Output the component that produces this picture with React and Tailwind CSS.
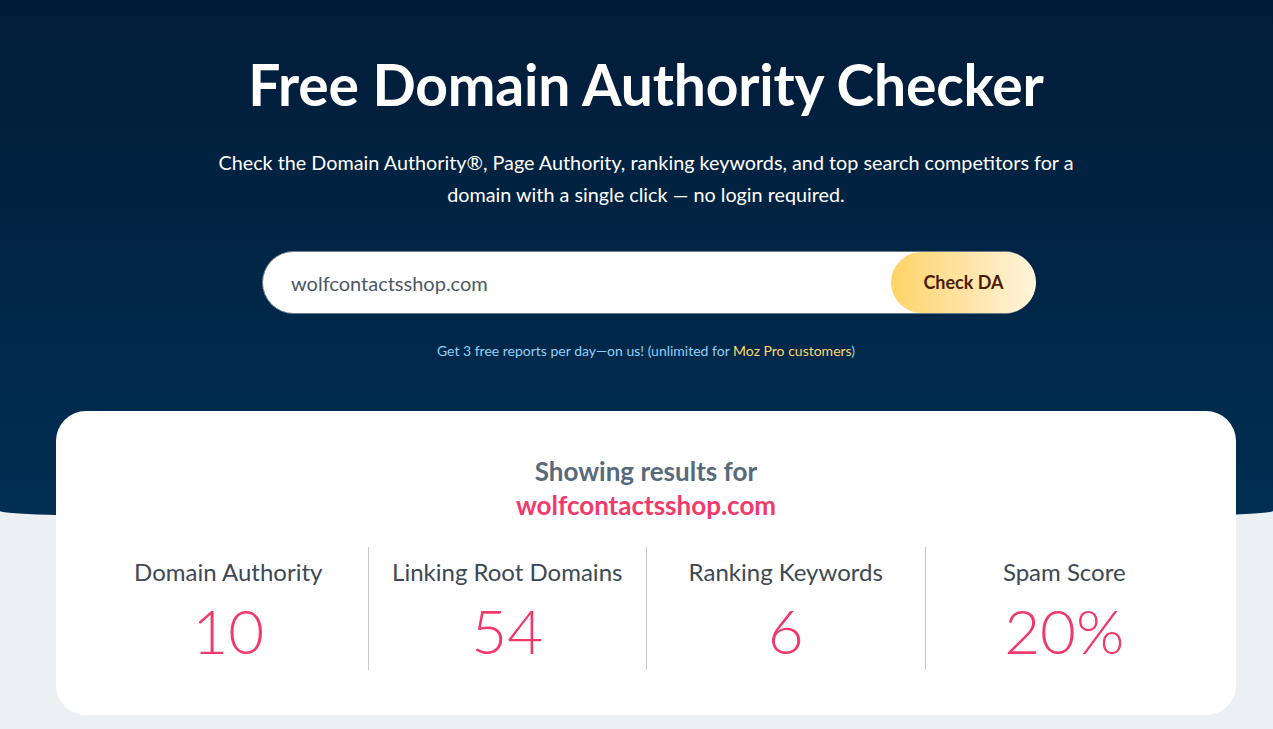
const stats = [
  { label: "Domain Authority", value: "10" },
  { label: "Linking Root Domains", value: "54" },
  { label: "Ranking Keywords", value: "6" },
  { label: "Spam Score", value: "20%" },
];

export default function App() {
  return (
    <div className="min-h-screen bg-[#ebf1f3] font-['Lato',sans-serif] overflow-hidden">
      <section className="bg-gradient-to-b from-[#011c38] to-[#012f54] rounded-b-[50%_10px] pl-[19px] pt-[50px] pb-[160px] text-center text-white">
        <h1 className="text-[57px] font-bold leading-[68px] tracking-[-0.2px]">
          Free Domain Authority Checker
        </h1>
        <p className="mt-[28px] mx-auto max-w-[880px] text-[19.8px] leading-[32px]">
          Check the Domain Authority®, Page Authority, ranking keywords, and top search competitors for a
          domain with a single click — no login required.
        </p>

        <form className="mt-[41px] ml-[calc(50%-384px)] w-[774px] h-[63px] flex items-center bg-white rounded-full border border-[#6b7a88]">
          <input
            defaultValue="wolfcontactsshop.com"
            className="flex-1 min-w-0 h-full bg-transparent pl-[28px] text-[20px] text-[#4b5866] outline-none"
          />
          <button
            type="button"
            className="h-full w-[145px] -mr-px rounded-full bg-gradient-to-r from-[#ffd466] via-[#ffe3a3] to-[#fff4dc] text-[18px] font-bold text-[#4a1d02]"
          >
            Check DA
          </button>
        </form>

        <p className="mt-[26px] text-[14px] leading-[21px] text-[#8fd0f7]">
          Get 3 free reports per day—on us! (unlimited for{" "}
          <span className="text-[#ffd56e]">Moz Pro customers</span>)
        </p>
      </section>

      <div className="-mt-[110px] ml-[56px] mr-[37px] bg-white rounded-[30px] px-[33px] pt-[43px] pb-[45px] text-center">
        <h2 className="text-[26px] font-bold leading-[34px] text-[#586a7a]">Showing results for</h2>
        <div className="text-[26px] font-bold leading-[34px] text-[#f03a6b]">wolfcontactsshop.com</div>

        <div className="mt-[25px] grid grid-cols-4">
          {stats.map((s, i) => (
            <div
              key={s.label}
              className={`h-[123px] pt-[10px] ${i > 0 ? "border-l border-[#c4c9cd]" : ""}`}
            >
              <div className="text-[24px] leading-[30px] text-[#3c4854]">{s.label}</div>
              <div className="mt-[10px] text-[62px] font-light leading-[66px] text-[#f03a6b]">{s.value}</div>
            </div>
          ))}
        </div>
      </div>
    </div>
  );
}
